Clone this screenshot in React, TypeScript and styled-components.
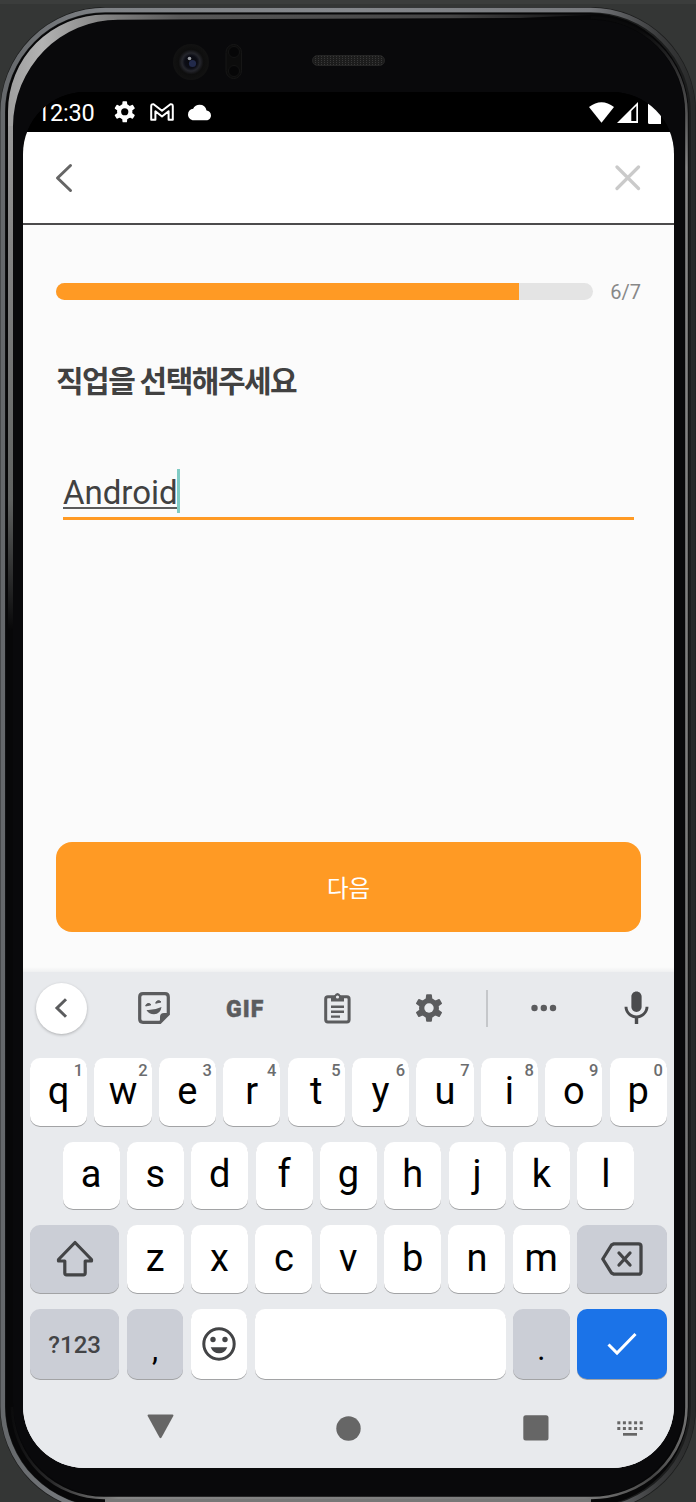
import React from "react";
import styled, { createGlobalStyle } from "styled-components";
import { MdCloud, MdMic } from "react-icons/md";

const ROBOTO = `Roboto, "Noto Sans CJK KR", sans-serif`;
const KOREAN = `"Noto Sans CJK KR", Roboto, sans-serif`;

const GlobalStyle = createGlobalStyle`
  * { box-sizing: border-box; }
  body { margin: 0; background: #343635; font-family: ${ROBOTO}; }
  svg { display: block; flex: none; }
  button { border: 0; padding: 0; font-family: inherit; }
`;

const Device = styled.div`
  position: relative;
  width: 696px;
  height: 1502px;
  padding: 92px 22px 34px 23px;
  overflow: hidden;
`;

const FrameArt = styled.svg`
  position: absolute;
  inset: 0;
`;

const Screen = styled.div`
  position: relative;
  height: 1376px;
  border-radius: 62px;
  overflow: hidden;
  background: linear-gradient(#000 0 200px, #e8eaed 200px);
  display: flex;
  flex-direction: column;
`;

const StatusBar = styled.div`
  height: 40px;
  flex: none;
  background: #000;
  color: #fff;
  display: flex;
  align-items: center;
  padding: 0 13px 0 14px;
`;

const Clock = styled.span`
  width: 77px;
  font-size: 23.5px;
  line-height: 28px;
  padding-top: 1px;
  letter-spacing: -0.2px;
`;

const StatusIcons = styled.div<{ $gap: number; $end?: boolean }>`
  display: flex;
  align-items: center;
  gap: ${(p) => p.$gap}px;
  margin-left: ${(p) => (p.$end ? "auto" : "0")};
`;

const BatterySlot = styled.span`
  padding: 2px 0 0 8px;
`;

const AppBar = styled.header`
  height: 93px;
  flex: none;
  background: #fff;
  border-bottom: 2px solid #4c4b4c;
  display: flex;
  align-items: center;
  justify-content: space-between;
  padding: 0 33px 0 32px;
`;

const Content = styled.main`
  height: 747px;
  flex: none;
  padding: 58px 33px 40px;
  display: flex;
  flex-direction: column;
  background: linear-gradient(#fbfbfb 742px, #eff0f1 747px);
`;

const ProgressRow = styled.div`
  display: flex;
  align-items: center;
  justify-content: space-between;
  height: 17px;
`;

const Track = styled.div`
  width: 537px;
  height: 17px;
  border-radius: 9px;
  background: #e4e4e4;
  overflow: hidden;
`;

const Fill = styled.div`
  height: 100%;
  background: #ff9a24;
`;

const Step = styled.span`
  font-size: 20px;
  line-height: 20px;
  color: #888;
`;

const Question = styled.h1`
  margin: 55px 0 0;
  height: 48px;
  font-family: ${KOREAN};
  font-size: 30px;
  line-height: 48px;
  font-weight: 700;
  letter-spacing: -1.5px;
  color: #414141;
`;

const Field = styled.div`
  margin: 66px 7px 0;
  height: 51px;
  border-bottom: 3px solid #ff9a24;
  display: flex;
  align-items: flex-start;
`;

const Typed = styled.span`
  margin-top: 8px;
  height: 32px;
  font-size: 33px;
  line-height: 31px;
  color: #414141;
  border-bottom: 2px solid #5a5a5a;
`;

const Caret = styled.span`
  width: 3px;
  height: 44px;
  margin-left: -1px;
  background: #80cbc4;
`;

const NextButton = styled.button`
  margin-top: auto;
  height: 90px;
  flex: none;
  border-radius: 16px;
  background: #ff9a24;
  color: #fff;
  font-family: ${KOREAN};
  font-size: 23.5px;
  padding-bottom: 1px;
`;

const Keyboard = styled.section`
  flex: 1;
  background: #e8eaed;
  display: flex;
  flex-direction: column;
`;

const Toolbar = styled.div`
  height: 86px;
  display: flex;
  align-items: center;
  padding: 0 0 14px 13px;
  color: #5b5c5e;
`;

const Collapse = styled.span`
  width: 51px;
  height: 51px;
  flex: none;
  border-radius: 50%;
  background: #fff;
  box-shadow: 0 1px 3px rgba(0, 0, 0, 0.25);
  display: flex;
  align-items: center;
  justify-content: center;
  margin-right: 50.5px;
`;

const Gif = styled.span`
  width: 40px;
  flex: none;
  margin: 0 58px 0 56.5px;
  padding-top: 3px;
  font-size: 23px;
  line-height: 24px;
  font-weight: 900;
  letter-spacing: 1.1px;
  -webkit-text-stroke: 0.4px currentColor;
`;

const Divider = styled.span`
  width: 2px;
  height: 37px;
  flex: none;
  background: #c5c7ca;
  margin: 0 43px 0 40px;
`;

const Keys = styled.div`
  display: flex;
  flex-direction: column;
  gap: 16px;
  padding: 0 7.2px 0 7px;
`;

const KeyRow = styled.div<{ $inset?: boolean; $tall?: boolean }>`
  display: flex;
  gap: 7.3px;
  height: ${(p) => (p.$tall ? 70 : 67.7)}px;
  padding: 0 ${(p) => (p.$inset ? 32.5 : 0)}px;
`;

type KeyTone = "light" | "muted" | "accent";
const tones: Record<KeyTone, string> = { light: "#fff", muted: "#cbced6", accent: "#1b73e8" };

const Key = styled.div<{ $tone?: KeyTone; $width?: number; $drop?: number }>`
  position: relative;
  flex: ${(p) => (p.$width ? `0 0 ${p.$width}px` : "1 1 0")};
  min-width: 0;
  border-radius: 10px;
  background: ${(p) => tones[p.$tone ?? "light"]};
  box-shadow: 0 1px 0.5px rgba(0, 0, 0, 0.3);
  display: flex;
  align-items: center;
  justify-content: center;
  font-size: 38px;
  line-height: 44px;
  color: #000;
  padding-bottom: ${(p) => 3 - (p.$drop ?? 0)}px;
`;

const Hint = styled.span`
  position: absolute;
  top: 3px;
  right: 4px;
  font-size: 16.5px;
  line-height: 20px;
  font-weight: 500;
  color: #6b6c6e;
`;

const ModeLabel = styled.span`
  font-size: 24px;
  line-height: 28px;
  font-weight: 500;
  color: #434446;
  padding-top: 4px;
`;

const Punctuation = styled.span`
  font-size: 31px;
  padding-top: 14px;
`;

const NavBar = styled.nav`
  display: flex;
  align-items: center;
  height: 62px;
  margin-top: 18px;
  padding-left: 124px;
  color: #666;
`;

const NavItem = styled.span<{ $after: number; $shift?: number }>`
  margin-right: ${(p) => p.$after}px;
  padding-bottom: ${(p) => p.$shift ?? 0}px;
`;

const DeviceFrame = () => (
  <FrameArt width="696" height="1502" viewBox="0 0 696 1502" fill="none">
    <defs>
      <linearGradient id="rim" x1="0" y1="0" x2="1" y2="0">
        <stop offset="0" stopColor="#65686b" />
        <stop offset="0.15" stopColor="#7f8286" />
        <stop offset="0.5" stopColor="#85888c" />
        <stop offset="0.85" stopColor="#77797d" />
        <stop offset="0.95" stopColor="#3a3b3c" />
        <stop offset="1" stopColor="#292a2a" />
      </linearGradient>
      <linearGradient id="gloss" x1="0" y1="0" x2="600" y2="0" gradientUnits="userSpaceOnUse">
        <stop offset="0" stopColor="#9a9a9a" />
        <stop offset="0.07" stopColor="#b2b2b2" />
        <stop offset="0.17" stopColor="#858585" />
        <stop offset="0.3" stopColor="#585858" />
        <stop offset="0.75" stopColor="#454545" />
        <stop offset="1" stopColor="#0a0a0b" />
      </linearGradient>
      <linearGradient id="glossSide" x1="0" y1="112" x2="0" y2="630" gradientUnits="userSpaceOnUse">
        <stop offset="0" stopColor="#9d9d9d" />
        <stop offset="0.25" stopColor="#858585" />
        <stop offset="0.75" stopColor="#606261" />
        <stop offset="1" stopColor="#070708" />
      </linearGradient>
      <linearGradient id="right" x1="0" y1="30" x2="0" y2="1407" gradientUnits="userSpaceOnUse">
        <stop offset="0" stopColor="#0a0a0b" />
        <stop offset="0.02" stopColor="#242425" />
        <stop offset="0.1" stopColor="#858585" />
        <stop offset="1" stopColor="#707070" />
      </linearGradient>
      <linearGradient id="base" x1="10" y1="0" x2="687" y2="0" gradientUnits="userSpaceOnUse">
        <stop offset="0" stopColor="#0a0a0b" />
        <stop offset="0.06" stopColor="#29292a" />
        <stop offset="0.16" stopColor="#858585" />
        <stop offset="0.85" stopColor="#7c7c7c" />
        <stop offset="0.95" stopColor="#454545" />
        <stop offset="1" stopColor="#707070" />
      </linearGradient>
      <radialGradient id="lens">
        <stop offset="0" stopColor="#08080c" />
        <stop offset="0.35" stopColor="#0c0d16" />
        <stop offset="0.5" stopColor="#25262c" />
        <stop offset="0.62" stopColor="#17171a" />
        <stop offset="0.7" stopColor="#0e0e0e" />
        <stop offset="1" stopColor="#121212" />
      </radialGradient>
      <pattern id="mesh" width="3" height="2" patternUnits="userSpaceOnUse">
        <rect width="3" height="2" fill="#1c1c1c" />
        <rect width="1" height="1" fill="#383838" />
      </pattern>
    </defs>
    <rect width="696" height="1502" fill="#343635" />
    <rect width="696" height="4" fill="#3b3d3c" />
    <rect x="0" y="7" width="696" height="1505" rx="105" fill="#1c1d1d" />
    <rect x="2.700" y="10" width="690.500" height="1499" rx="102.500" stroke="url(#rim)" strokeWidth="4.600" />
    <rect x="5.500" y="13" width="683" height="1493" rx="99.500" fill="#070708" />
    <rect x="13" y="19.700" width="671.500" height="1476.300" rx="93" fill="#09090b" />
    <path d="M10.500 124V630" stroke="url(#glossSide)" strokeWidth="5" />
    <path d="M8 112A97 97 0 0 1 105 14.500H600L520 18L118 19.700A105 107 0 0 0 13 126H8Z" fill="url(#gloss)" />
    <path d="M591 17.500A95.500 95.500 0 0 1 686.500 113V1407" stroke="url(#right)" strokeWidth="2.600" />
    <path d="M12 1407A92 92 0 0 0 105 1498H591A95.500 91 0 0 0 686.500 1407" stroke="url(#base)" strokeWidth="2.600" />
    <path d="M105 1500.500H591" stroke="#777" strokeWidth="3" />
    <circle cx="191" cy="62" r="18" fill="url(#lens)" />
    <circle cx="192.500" cy="63.500" r="3.600" fill="#222a4b" />
    <circle cx="189.500" cy="58.500" r="1.800" fill="#999da3" />
    <rect x="226" y="44.500" width="15.500" height="34" rx="7.700" fill="#0c0c0c" stroke="#161616" />
    <circle cx="234" cy="52" r="5.500" fill="#060607" stroke="#141414" />
    <circle cx="234" cy="71" r="5.500" fill="#060607" stroke="#141414" />
    <rect x="312.500" y="55.500" width="72" height="10" rx="5" fill="url(#mesh)" stroke="#242424" />
  </FrameArt>
);

const GEAR_TEETH = [0, 60, 120, 180, 240, 300];

const GearIcon = ({ size, hole }: { size: number; hole: string }) => (
  <svg width={size} height={size} viewBox="0 0 28 28" fill="currentColor">
    <circle cx="14" cy="14" r="10" />
    {GEAR_TEETH.map((angle) => (
      <path key={angle} d="M10.600 6L11.100 1Q11.200 0.300 12 0.300H16Q16.800 0.300 16.900 1L17.400 6Z" transform={`rotate(${angle} 14 14)`} />
    ))}
    <circle cx="14" cy="14" r="4.700" fill={hole} />
  </svg>
);

const GmailIcon = () => (
  <svg width="24" height="18" viewBox="0 0 24 18" fill="none" stroke="#fff" strokeWidth="2" strokeLinejoin="round">
    <path d="M1.200 16.700V3.200Q1.200 0.800 3.600 1.200L12 7.700L20.400 1.200Q22.800 0.800 22.800 3.200V16.700H18.600V8.300L12 13.500L5.400 8.300V16.700Z" />
  </svg>
);

const WifiIcon = () => (
  <svg width="25" height="21" viewBox="0 0 25 21">
    <path d="M0 5Q12.500-4.500 25 5L12.500 20.700Z" fill="#fff" />
  </svg>
);

const SignalIcon = () => (
  <svg width="21" height="21" viewBox="0 0 21 21">
    <path d="M0 21L21 0V21Z" fill="#fff" />
    <path d="M14.300 9L19.300 4V19H14.300Z" fill="#000" />
  </svg>
);

const BatteryIcon = () => (
  <svg width="13" height="21" viewBox="0 0 13 21">
    <path d="M0 0H13V21H1.500Q0 21 0 19.500Z" fill="#fff" />
  </svg>
);

const StickerIcon = () => (
  <svg width="32" height="32" viewBox="0 0 32 32" fill="none">
    <path d="M5 1.700H27Q30.300 1.700 30.300 5V22L22 30.300H5Q1.700 30.300 1.700 27V5Q1.700 1.700 5 1.700Z" stroke="currentColor" strokeWidth="3.200" />
    <path d="M31 21L22 31V25Q22 21 26 21Z" fill="currentColor" />
    <path d="M8.500 18Q16 18.500 23.500 15Q22.500 22 16 22.300Q11 22.300 8.500 18Z" fill="currentColor" />
    <path d="M7.700 14A2.900 2.900 0 0 1 13 12.800ZM17.700 11.200A2.900 2.900 0 0 1 23 10Z" fill="currentColor" stroke="currentColor" strokeWidth="1" />
  </svg>
);

const ClipboardIcon = () => (
  <svg width="27" height="32" viewBox="0 0 27 32" fill="none">
    <rect x="1.700" y="4.700" width="23.400" height="25.300" rx="2.200" stroke="currentColor" strokeWidth="3" />
    <path d="M7 4H10Q13.500-2 17 4H20V9.500H7Z" fill="currentColor" />
    <circle cx="13.500" cy="5" r="1.600" fill="#e8eaed" />
    <path d="M7 14.700H20M7 19.700H20M7 24.600H16" stroke="currentColor" strokeWidth="2.400" />
  </svg>
);

const ShiftIcon = () => (
  <svg width="38" height="37" viewBox="0 0 38 37" fill="none" stroke="#434446" strokeWidth="3.200" strokeLinejoin="round">
    <path d="M19 2.500L35.500 19.500V21H29.200V33Q29.200 34.800 27.500 34.800H10.500Q8.800 34.800 8.800 33V21H2.500V19.500Z" />
  </svg>
);

const BackspaceIcon = () => (
  <svg width="42" height="34" viewBox="0 0 42 34" fill="none" stroke="#434446" strokeWidth="3.300" strokeLinejoin="round">
    <path d="M13 1.800H37.500Q40 1.800 40 4.300V29.700Q40 32.200 37.500 32.200H13L10.500 31L1.800 17L10.500 3Z" />
    <path d="M18 11L29 23M29 11L18 23" strokeLinecap="round" />
  </svg>
);

const SmileIcon = () => (
  <svg width="34" height="34" viewBox="0 0 34 34" fill="#434446">
    <circle cx="17" cy="17" r="15.200" fill="none" stroke="#434446" strokeWidth="3" />
    <circle cx="11" cy="12.500" r="2.700" />
    <circle cx="23" cy="12.500" r="2.700" />
    <path d="M8.700 20.300H25.300Q23 26.300 17 26.300Q11 26.300 8.700 20.300Z" />
  </svg>
);

const LayoutIcon = () => (
  <svg width="26" height="15" viewBox="0 0 26 15" fill="currentColor">
    {[0, 1, 2, 3, 4].map((c) => (
      <React.Fragment key={c}>
        <rect x={0.3 + c * 5.6} y="0.300" width="3" height="3" />
        <rect x={0.3 + c * 5.6} y="6" width="3" height="3" />
      </React.Fragment>
    ))}
    <rect x="6" y="12" width="14" height="2.700" />
  </svg>
);

const TOP = "qwertyuiop".split("");
const HOME = "asdfghjkl".split("");
const BOTTOM = "zxcvbnm".split("");

const MicIcon = styled(MdMic)`
  margin-left: 59px;
  color: #4b4c4e;
`;

const SettingsSlot = styled.span`
  margin: 0 3px 0 63.5px;
`;

export default function App() {
  return (
    <>
      <GlobalStyle />
      <Device>
        <DeviceFrame />
        <Screen>
          <StatusBar>
            <Clock>12:30</Clock>
            <StatusIcons $gap={14}>
              <GearIcon size={21.5} hole="#000" />
              <GmailIcon />
              <MdCloud size={23} />
            </StatusIcons>
            <StatusIcons $gap={2.5} $end>
              <WifiIcon />
              <SignalIcon />
              <BatterySlot>
                <BatteryIcon />
              </BatterySlot>
            </StatusIcons>
          </StatusBar>
          <AppBar>
            <svg width="20" height="30" viewBox="0 0 20 30" fill="none" stroke="#666" strokeWidth="3" strokeLinecap="round" strokeLinejoin="round">
              <path d="M15.500 2.500L2.500 15L15.500 27.500" />
            </svg>
            <svg width="26" height="26" viewBox="0 0 26 26" fill="none" stroke="#cacaca" strokeWidth="3.200" strokeLinecap="round">
              <path d="M2 2L23.500 23.500M23.500 2L2 23.500" />
            </svg>
          </AppBar>
          <Content>
            <ProgressRow>
              <Track>
                <Fill style={{ width: `${(462.5 / 537) * 100}%` }} />
              </Track>
              <Step>6/7</Step>
            </ProgressRow>
            <Question>직업을 선택해주세요</Question>
            <Field>
              <Typed>Android</Typed>
              <Caret />
            </Field>
            <NextButton>다음</NextButton>
          </Content>
          <Keyboard>
            <Toolbar>
              <Collapse>
                <svg width="16" height="20" viewBox="0 0 16 20" fill="none" stroke="currentColor" strokeWidth="3">
                  <path d="M12 1.200L3 10L12 18.800" />
                </svg>
              </Collapse>
              <StickerIcon />
              <Gif>GIF</Gif>
              <ClipboardIcon />
              <SettingsSlot>
                <GearIcon size={28} hole="#e8eaed" />
              </SettingsSlot>
              <Divider />
              <svg width="26" height="8" viewBox="0 0 26 8" fill="currentColor">
                <circle cx="3.500" cy="4" r="3.200" />
                <circle cx="12.800" cy="4" r="3.200" />
                <circle cx="22" cy="4" r="3.200" />
              </svg>
              <MicIcon size={41} />
            </Toolbar>
            <Keys>
              <KeyRow>
                {TOP.map((letter, i) => (
                  <Key key={letter} $drop={2}>
                    {letter}
                    <Hint>{(i + 1) % 10}</Hint>
                  </Key>
                ))}
              </KeyRow>
              <KeyRow $inset>
                {HOME.map((letter) => (
                  <Key key={letter}>{letter}</Key>
                ))}
              </KeyRow>
              <KeyRow>
                <Key $tone="muted" $width={89.3} $drop={2}>
                  <ShiftIcon />
                </Key>
                {BOTTOM.map((letter) => (
                  <Key key={letter}>{letter}</Key>
                ))}
                <Key $tone="muted" $width={89.7} $drop={3}>
                  <BackspaceIcon />
                </Key>
              </KeyRow>
              <KeyRow $tall>
                <Key $tone="muted" $width={89.3}>
                  <ModeLabel>?123</ModeLabel>
                </Key>
                <Key $tone="muted" $width={56.8}>
                  <Punctuation>,</Punctuation>
                </Key>
                <Key $width={56.8} $drop={2}>
                  <SmileIcon />
                </Key>
                <Key />
                <Key $tone="muted" $width={56.8}>
                  <Punctuation>.</Punctuation>
                </Key>
                <Key $tone="accent" $width={89.7} $drop={2}>
                  <svg width="30" height="24" viewBox="0 0 30 24" fill="none" stroke="#fff" strokeWidth="3">
                    <path d="M1.500 12.500L10 21L28.500 2" />
                  </svg>
                </Key>
              </KeyRow>
            </Keys>
            <NavBar>
              <NavItem $after={162} $shift={4}>
                <svg width="27" height="25" viewBox="0 0 27 25" fill="currentColor">
                  <path d="M1.500 0.500H25.500Q27 0.500 26.300 2L14.500 23.500Q13.500 25 12.500 23.500L0.700 2Q0 0.500 1.500 0.500Z" />
                </svg>
              </NavItem>
              <NavItem $after={162}>
                <svg width="25" height="25" viewBox="0 0 25 25" fill="currentColor">
                  <circle cx="12.500" cy="12.500" r="12.200" />
                </svg>
              </NavItem>
              <NavItem $after={68}>
                <svg width="26" height="26" viewBox="0 0 26 26" fill="currentColor">
                  <rect x="0.300" y="0.300" width="25.200" height="25.200" rx="2.500" />
                </svg>
              </NavItem>
              <NavItem $after={0}>
                <LayoutIcon />
              </NavItem>
            </NavBar>
          </Keyboard>
        </Screen>
      </Device>
    </>
  );
}
